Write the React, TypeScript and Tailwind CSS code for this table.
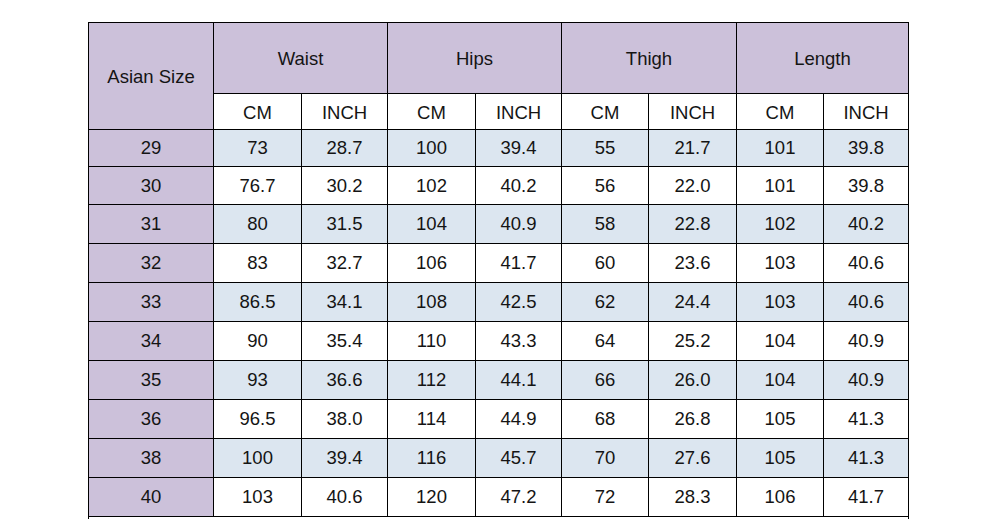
import React from "react";

const rows: [string, string, string, string, string, string, string, string, string][] = [
  ["29", "73", "28.7", "100", "39.4", "55", "21.7", "101", "39.8"],
  ["30", "76.7", "30.2", "102", "40.2", "56", "22.0", "101", "39.8"],
  ["31", "80", "31.5", "104", "40.9", "58", "22.8", "102", "40.2"],
  ["32", "83", "32.7", "106", "41.7", "60", "23.6", "103", "40.6"],
  ["33", "86.5", "34.1", "108", "42.5", "62", "24.4", "103", "40.6"],
  ["34", "90", "35.4", "110", "43.3", "64", "25.2", "104", "40.9"],
  ["35", "93", "36.6", "112", "44.1", "66", "26.0", "104", "40.9"],
  ["36", "96.5", "38.0", "114", "44.9", "68", "26.8", "105", "41.3"],
  ["38", "100", "39.4", "116", "45.7", "70", "27.6", "105", "41.3"],
  ["40", "103", "40.6", "120", "47.2", "72", "28.3", "106", "41.7"],
];

const groups = ["Waist", "Hips", "Thigh", "Length"];

export default function App() {
  return (
    <div
      className="min-h-screen bg-white pl-[88px] pt-[22px] text-[18.5px] text-[#141414]"
      style={{ fontFamily: '"Liberation Sans", Arial, sans-serif' }}
    >
      <div className="grid w-fit grid-cols-[124px_87px_85px_87px_85px_86px_87px_86px_84px] grid-rows-[70px_35px_36px_37px_38px_38px_38px_38px_38px_38px_38px_38px_40px] gap-px border border-black bg-black">
        <div className="row-span-2 flex items-center justify-center bg-[#ccc1da] pt-[2px]">
          Asian Size
        </div>
        {groups.map((g) => (
          <div
            key={g}
            className="col-span-2 flex items-center justify-center bg-[#ccc1da] pt-px"
          >
            {g}
          </div>
        ))}
        {groups.map((g) => (
          <React.Fragment key={g + "-u"}>
            <div className="flex items-center justify-center bg-white pt-[3px]">CM</div>
            <div className="flex items-center justify-center bg-white pt-[3px]">INCH</div>
          </React.Fragment>
        ))}
        {rows.map((r, i) => (
          <React.Fragment key={r[0]}>
            {r.map((c, j) => (
              <div
                key={j}
                className={
                  "flex items-center justify-center " +
                  (j === 0
                    ? "bg-[#ccc1da]"
                    : i % 2 === 0
                    ? "bg-[#dce6f0]"
                    : "bg-white")
                }
              >
                {c}
              </div>
            ))}
          </React.Fragment>
        ))}
        <div className="col-span-9 bg-white" />
      </div>
    </div>
  );
}
